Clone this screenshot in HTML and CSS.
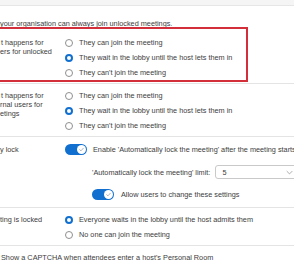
FILE: index.html
```html
<!DOCTYPE html>
<html>
<head>
<meta charset="utf-8">
<link rel="stylesheet" href="styles.css">
</head>
<body>
<div class="topbar"></div>
<div class="page">
  <p class="note">your organisation can always join unlocked meetings.</p>

  <div class="row r1">
    <div class="label"><span class="l1">t happens for</span><br>ers for unlocked</div>
    <div class="opts">
      <div class="opt"><span class="radio"></span>They can join the meeting</div>
      <div class="opt"><span class="radio on"></span>They wait in the lobby until the host lets them in</div>
      <div class="opt"><span class="radio"></span>They can't join the meeting</div>
    </div>
    <div class="highlight"></div>
  </div>

  <div class="row">
    <div class="label"><span class="l1">t happens for</span><br>rnal users for<br>etings</div>
    <div class="opts">
      <div class="opt"><span class="radio"></span>They can join the meeting</div>
      <div class="opt"><span class="radio on"></span>They wait in the lobby until the host lets them in</div>
      <div class="opt"><span class="radio"></span>They can't join the meeting</div>
    </div>
  </div>

  <div class="row r3">
    <div class="label lock">y lock</div>
    <div class="opts">
      <div class="opt"><span class="toggle"><span class="knob"><svg viewBox="0 0 10 10" width="9" height="9"><path d="M3 5.2 L4.4 6.5 L7 3.6" fill="none" stroke="#9aa4b2" stroke-width="0.9" stroke-linecap="round" stroke-linejoin="round"/></svg></span></span>Enable 'Automatically lock the meeting' after the meeting starts</div>
      <div class="limit">'Automatically lock the meeting' limit:<div class="select"><span>5</span><svg class="chev" viewBox="0 0 10 6" width="7" height="5"><path d="M1 1 L5 5 L9 1" fill="none" stroke="#8a8a8a" stroke-width="1"/></svg></div></div>
      <div class="opt sub"><span class="toggle"><span class="knob"><svg viewBox="0 0 10 10" width="9" height="9"><path d="M3 5.2 L4.4 6.5 L7 3.6" fill="none" stroke="#9aa4b2" stroke-width="0.9" stroke-linecap="round" stroke-linejoin="round"/></svg></span></span>Allow users to change these settings</div>
    </div>
  </div>

  <div class="row">
    <div class="label">ting is locked</div>
    <div class="opts">
      <div class="opt"><span class="radio on"></span>Everyone waits in the lobby until the host admits them</div>
      <div class="opt"><span class="radio"></span>No one can join the meeting</div>
    </div>
  </div>

  <div class="captcha">Show a CAPTCHA when attendees enter a host's Personal Room</div>
</div>
</body>
</html>
```

FILE: styles.css
```css
html, body {
  margin: 0;
  padding: 0;
  background: #ffffff;
  overflow: hidden;
}
body {
  width: 294px;
  height: 273px;
  font-family: "Liberation Sans", Arial, sans-serif;
  font-size: 7.3px;
  color: #3d3d3d;
}
.topbar {
  height: 5px;
  background: #f5f5f5;
  border-bottom: 1px solid #e6e6e6;
}
.page {
  width: 294px;
}
.note {
  margin: 0;
  padding: 13px 0 0 0;
  height: 10px;
  line-height: 10px;
  white-space: nowrap;
}
.row {
  display: grid;
  grid-template-columns: 65px 1fr;
  padding: 4px 0 3px;
  border-bottom: 1px solid #e4e4e4;
}
.r1 {
  position: relative;
  padding-top: 6px;
}
.label {
  margin-top: 3px;
  line-height: 9px;
  white-space: nowrap;
}
.l1 {
  padding-left: 1px;
}
.opts {
  display: flex;
  flex-direction: column;
}
.opt {
  display: flex;
  align-items: center;
  height: 15px;
  gap: 6px;
  white-space: nowrap;
}
.radio {
  box-sizing: border-box;
  width: 8px;
  height: 8px;
  border-radius: 50%;
  border: 1px solid #8f8f8f;
  background: #fff;
  flex: none;
}
.radio.on {
  border: 2.5px solid #1170cf;
}
.highlight {
  position: absolute;
  top: -2px;
  left: -20px;
  width: 268px;
  bottom: 1px;
  border: 2px solid #d22f3b;
  box-sizing: border-box;
  pointer-events: none;
}
.r3 {
  padding: 5px 0 5px;
}
.toggle {
  box-sizing: border-box;
  width: 22px;
  height: 11px;
  border-radius: 6px;
  background: #1170cf;
  display: flex;
  justify-content: flex-end;
  align-items: center;
  padding: 1px;
  flex: none;
}
.knob {
  width: 9px;
  height: 9px;
  border-radius: 50%;
  background: #ffffff;
  display: flex;
  align-items: center;
  justify-content: center;
}
.limit {
  display: flex;
  align-items: center;
  gap: 5px;
  margin: 8px 0 8px 27px;
  white-space: nowrap;
}
.select {
  box-sizing: border-box;
  width: 85px;
  height: 14px;
  border: 1px solid #c9c9c9;
  border-radius: 3px;
  display: flex;
  align-items: center;
  justify-content: space-between;
  padding: 0 6px;
  flex: none;
}
.sub {
  margin-left: 27px;
  gap: 7px;
}
.captcha {
  padding: 7px 0 0 1px;
  height: 10px;
  line-height: 10px;
  white-space: nowrap;
}
```
